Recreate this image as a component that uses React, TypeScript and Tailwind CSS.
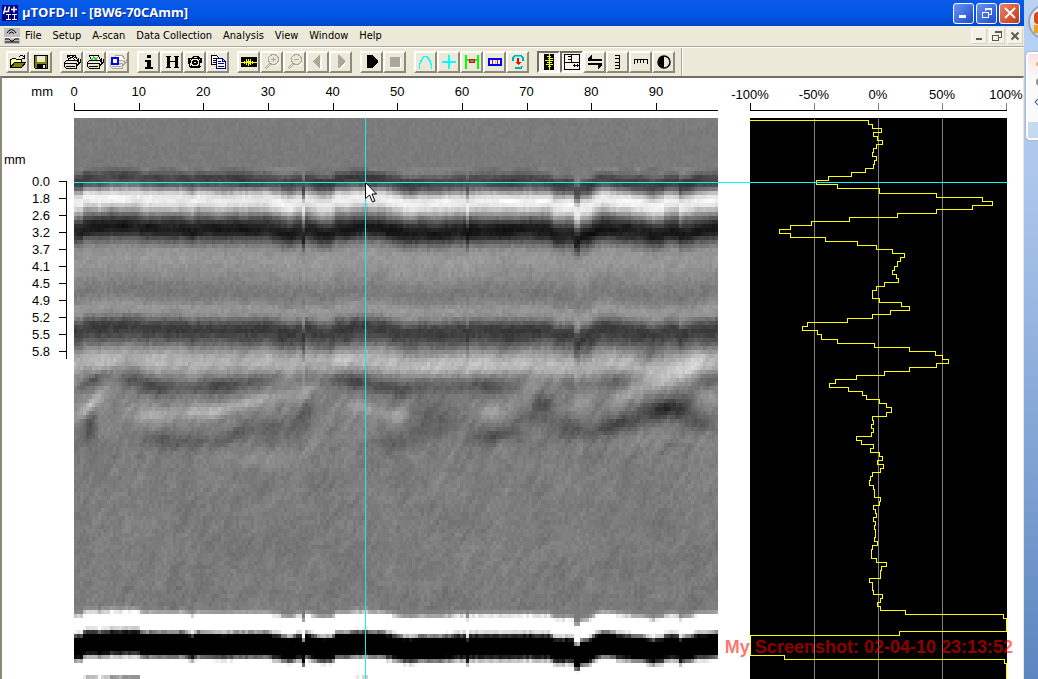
// frontend/src/App.tsx
import React, { useEffect, useRef } from 'react';

const MENU_ITEMS = ['File', 'Setup', 'A-scan', 'Data Collection', 'Analysis', 'View', 'Window', 'Help'];

const X_TICKS = [0, 10, 20, 30, 40, 50, 60, 70, 80, 90];
const DEPTHS = ['0.0', '1.8', '2.6', '3.2', '3.7', '4.1', '4.5', '4.9', '5.2', '5.5', '5.8'];
const PERCENTS = [-100, -50, 0, 50, 100];

// --- B-scan data ---
const COLS = 215;
const ROWS = 138;
const SCAN_H = 561;

// [depth in px, grey level] of a typical column
const PROFILE: [number, number][] = [
  [0, 124], [50, 122], [54, 100], [58, 68], [63, 66], [67, 88], [71, 140], [76, 215],
  [81, 244], [86, 232], [90, 190], [95, 130], [100, 76], [105, 38], [111, 24], [116, 40],
  [120, 78], [125, 118], [131, 146], [141, 152], [153, 144], [165, 128], [174, 120],
  [182, 132], [189, 152], [196, 142], [202, 100], [207, 64], [213, 58], [219, 78],
  [225, 105], [230, 138], [238, 170], [246, 176], [252, 155], [258, 135], [266, 126],
  [485, 122], [490, 124], [494, 165], [497, 280], [509, 300], [513, 190], [516, 40],
  [519, -60], [532, -60], [536, 20], [539, 140], [543, 300], [559, 290], [561, 150], [566, 110],
];

// [x, vertical shift] of the echoes along the scan
const SHIFTS: [number, number][] = [
  [0, 3], [8, 3], [10, -1], [34, -1], [37, -2], [64, -2], [67, 0], [110, 0], [117, 3], [122, 0],
  [150, 1], [190, 0], [206, 3], [216, 6], [222, 2], [227, 2], [228, 8], [231, 8], [232, 1],
  [246, 5], [257, 5], [262, 1], [291, -1], [308, 0], [320, 3], [336, 6], [345, 4], [370, 4],
  [392, 2], [393, 6], [396, 6], [397, 2], [440, 2], [477, 2], [479, 6], [500, 6], [502, 13],
  [505, 13], [507, 8], [515, 7], [522, 2], [530, -1], [545, 2], [568, 4], [579, 7], [590, 5],
  [593, 2], [604, 3], [606, 7], [612, 5], [622, 2], [644, 0],
];

// [x, y, radius x, radius y, slope, strength]
const BLOBS: [number, number, number, number, number, number][] = [
  [18, 262, 16, 6, -0.5, -48],
  [16, 286, 14, 8, -0.8, 60],
  [16, 308, 7, 12, -0.8, -46],
  [60, 262, 22, 8, 0.1, -30],
  [82, 270, 15, 8, 0, -50],
  [115, 271, 20, 7, 0, -28],
  [145, 268, 20, 8, -0.05, -56],
  [185, 262, 32, 7, -0.2, -34],
  [82, 297, 22, 9, 0, 46],
  [125, 294, 24, 7, 0, 44],
  [155, 289, 22, 7, -0.2, 38],
  [192, 280, 28, 6, -0.2, 30],
  [230, 275, 16, 8, -0.7, 38],
  [84, 322, 20, 8, 0, -28],
  [120, 325, 22, 8, 0, -26],
  [160, 316, 22, 8, -0.3, -32],
  [200, 308, 22, 10, 0, -18],
  [225, 301, 14, 12, -0.9, -38],
  [190, 342, 34, 8, 0, 14],
  [250, 262, 20, 8, 0, -22],
  [280, 263, 22, 8, 0.1, -48],
  [318, 271, 22, 8, 0.1, -48],
  [352, 268, 20, 8, 0, -30],
  [385, 268, 18, 8, 0, -28],
  [420, 268, 22, 9, 0.1, -50],
  [292, 290, 14, 7, 0.2, 30],
  [322, 297, 18, 8, 0.1, 38],
  [355, 300, 22, 12, 0, -24],
  [318, 325, 26, 8, 0, -26],
  [355, 315, 18, 8, 0, -22],
  [418, 294, 16, 9, 0, 38],
  [420, 318, 24, 8, -0.2, -36],
  [455, 272, 14, 12, -0.9, 28],
  [468, 286, 12, 9, 0, -56],
  [463, 300, 20, 8, 0, -30],
  [505, 265, 18, 8, 0, -26],
  [508, 282, 16, 9, -0.4, 24],
  [540, 284, 14, 9, -0.4, 14],
  [505, 312, 28, 11, 0, -30],
  [540, 262, 20, 8, -0.3, -22],
  [560, 274, 18, 7, -0.3, 24],
  [596, 260, 22, 12, -0.3, 48],
  [624, 250, 18, 8, -0.2, 16],
  [548, 305, 22, 9, -0.2, -46],
  [590, 290, 28, 11, -0.15, -72],
  [622, 302, 22, 10, 0.3, -34],
  [634, 278, 14, 8, 0, 28],
  [595, 320, 38, 8, 0, 14],
  [638, 262, 10, 8, 0, -30],
  [345, 248, 24, 8, 0, 24],
  [420, 248, 24, 7, 0, 20],
  [260, 240, 26, 7, 0, 24],
  [620, 238, 14, 8, 0, 22],
  [572, 238, 14, 7, 0, -28],
  [450, 248, 18, 8, 0, 12],
];

const interpolate = (points: [number, number][], at: number) => {
  if (at <= points[0][0]) return points[0][1];
  for (let i = 1; i < points.length; i++) {
    if (at <= points[i][0]) {
      const [x0, y0] = points[i - 1];
      const [x1, y1] = points[i];
      return y0 + ((y1 - y0) * (at - x0)) / (x1 - x0);
    }
  }
  return points[points.length - 1][1];
};

const hash = (a: number, b: number) => {
  const s = Math.sin(a * 127.1 + b * 311.7) * 43758.5453;
  return s - Math.floor(s) - 0.5;
};

const smoothNoise = (x: number, y: number) => {
  const xi = Math.floor(x);
  const yi = Math.floor(y);
  const fx = x - xi;
  const fy = y - yi;
  const top = hash(xi, yi) * (1 - fx) + hash(xi + 1, yi) * fx;
  const bottom = hash(xi, yi + 1) * (1 - fx) + hash(xi + 1, yi + 1) * fx;
  return top * (1 - fy) + bottom * fy;
};

const greyAt = (col: number, row: number) => {
  const x = col * 3 + 1;
  const y = row * (SCAN_H / ROWS) + 2;
  const shift = interpolate(SHIFTS, x) + hash(col, 5) * 1.2;
  let value = interpolate(PROFILE, y - shift);

  if (y > 225 && y < 485) {
    for (const [bx, by, rx, ry, slope, strength] of BLOBS) {
      const dx = x - bx;
      const dy = y - by - dx * slope;
      value += strength * Math.exp(-(dx * dx) / (rx * rx) - (dy * dy) / (ry * ry));
    }
  }
  // echoes lower down are streaked along the diagonal
  if (y > 120 && y < 490) {
    const fade = y < 220 ? 0.5 : y < 340 ? 1.3 : 0.8;
    value += smoothNoise((col + row * 0.9) / 2, (row - col * 0.6) / 5) * 20 * fade;
    value += smoothNoise(col / 9 + 40, row / 5) * 14 * fade;
  }
  // the echoes are not perfectly even along the scan
  if (y > 50 && y < 120) value += smoothNoise(col / 4, row / 2 + 90) * 26;
  if (y < 490) value += hash(col, row) * (y < 120 ? 9 : 14);
  return Math.max(0, Math.min(255, Math.round(value)));
};

function BScan() {
  const canvasRef = useRef<HTMLCanvasElement>(null);

  useEffect(() => {
    const ctx = canvasRef.current?.getContext('2d');
    if (!ctx) return;
    const image = ctx.createImageData(COLS, ROWS);
    for (let row = 0; row < ROWS; row++) {
      for (let col = 0; col < COLS; col++) {
        const grey = greyAt(col, row);
        const i = (row * COLS + col) * 4;
        image.data[i] = grey;
        image.data[i + 1] = grey;
        image.data[i + 2] = grey;
        image.data[i + 3] = 255;
      }
    }
    ctx.putImageData(image, 0, 0);
  }, []);

  return (
    <canvas
      ref={canvasRef}
      width={COLS}
      height={ROWS}
      className="block h-[561px] w-full [image-rendering:pixelated]"
    />
  );
}

// --- A-scan data: [x] or [x, height] per sample, height is 4 when left out ---
const SAMPLES: number[][] = [
  [118], [122], [131], [123], [127], [132], [126], [123], [122], [126], [124], [123], [115],
  [101], [78], [66], [87], [129, 5], [186], [232], [242], [222], [186], [147], [99], [61],
  [40], [29], [40], [75], [107], [126], [142], [154], [150], [147, 5], [144], [142], [146],
  [148], [134], [126], [122, 8], [129], [151], [159], [140], [122], [97], [57], [52], [67],
  [71, 5], [87], [124], [159], [185], [192], [198], [186], [159], [134], [106], [85], [79],
  [98], [112], [116], [129], [136], [141, 5], [136], [122], [123], [121], [123], [121],
  [106], [111], [123], [120], [129], [132], [127], [133], [130], [122], [120], [119, 5],
  [123], [124, 8], [130], [129], [123], [125], [126], [123], [125], [124], [125, 8], [124],
  [127], [122], [121, 9], [126], [136], [131], [130, 8], [119], [122, 8], [123], [132],
  [130], [127], [130], [155], [253], [256, 13], [149], [0, 20], [34], [254], [256, 16],
];

const buildTrace = () => {
  let y = 2;
  let d = 'M0 1V2';
  for (const [x, h = 4] of SAMPLES) {
    y += h;
    d += `H${x}V${y}`;
  }
  return d;
};

function AScan() {
  return (
    <svg className="block h-[561px] w-[257px] bg-black" viewBox="0 0 257 561" shapeRendering="crispEdges">
      <g transform="translate(0.5 0.5)" fill="none">
        <path d="M64 0V561M128 0V561M192 0V561" stroke="#808080" />
        <path d={buildTrace()} stroke="#ffff00" />
      </g>
    </svg>
  );
}

// --- Toolbar icons ---
const Icon = ({ children }: { children: React.ReactNode }) => (
  <svg className="h-4 w-4 overflow-visible" viewBox="0 0 16 16" fill="none" stroke="#000" shapeRendering="crispEdges" aria-hidden="true">
    {children}
  </svg>
);

const PrinterBody = ({ color = '#000', fill = '#ece9d8' }) => (
  <>
    <path d="M2.5 6.5H12L14.5 4.5V9L12.5 12.5V14.5H2.5L0.5 12.5V8.5Z" fill={fill} stroke={color} />
    <path d="M1 9.5H12.5V12M2 12.5H11M13 7.5H15M14 10.5L16 8.5V5" stroke={color} />
  </>
);

const icons: Record<string, React.ReactNode> = {
  open: (
    <>
      <path d="M1 13V5H2L3 4H6L7 5H11V8H5L1 13Z" fill="#ffff99" stroke="none" />
      <path d="M0.5 13.5V5.5H1.5L2.5 4.5H5.5L6.5 5.5H11.5V7.5" />
      <path d="M0.5 13.5L4.5 8.5H15.5L11.5 13.5Z" fill="#808000" />
      <path d="M9 2.5H10M10 1.5H13M13 2.5H14M14.5 1V5M12 4.5H15" />
    </>
  ),
  save: (
    <>
      <path d="M1.5 1.5H14.5V14.5H2.5L1.5 13.5Z" fill="#808000" />
      <path d="M4 2H12V8H4Z" fill="#ece9d8" stroke="none" />
      <path d="M4 10H13V15H4Z" fill="#000" stroke="none" />
      <path d="M10 11H12V14H10Z" fill="#ece9d8" stroke="none" />
    </>
  ),
  printB: (
    <>
      <PrinterBody />
      <path d="M4.5 6.5L3.5 1.5H11.5L13.5 6.5Z" fill="#fff" />
      <path d="M4 3L7 1L10 3L12 4M5 5L8 3L11 6" />
    </>
  ),
  printA: (
    <>
      <PrinterBody />
      <path d="M4.5 6.5L2.5 1.5H11.5L13.5 6.5Z" fill="#fff" />
      <path d="M4 5.5H5L6.5 3L9 5.5L10.5 3" stroke="#00e000" />
      <path d="M8 11.5H11" stroke="#ffff00" />
    </>
  ),
  printSetup: (
    <>
      <PrinterBody color="#aca899" />
      <path d="M5.5 5.5V1.5H12.5L14.5 5.5" fill="#fff" stroke="#aca899" />
      <path d="M2 4H8V10H2Z" fill="#fff" stroke="#0000ff" strokeWidth="2" />
    </>
  ),
  info: <path d="M6 1H10V4H6ZM4 6H10V13H12V15H4V13H6V8H4Z" fill="#000" stroke="none" />,
  header: <path d="M2 2H7V3H6V7H11V3H10V2H15V3H14V13H15V14H10V13H11V8H6V13H7V14H2V13H3V3H2Z" fill="#000" stroke="none" />,
  camera: (
    <>
      <path d="M1 4H4L6 2H11L13 4H15V6L14 13L12 14H4L2 13L1 7Z" fill="#000" stroke="none" />
      <circle cx="8" cy="8.5" r="3.5" stroke="#ece9d8" />
      <circle cx="8" cy="8.5" r="1" fill="#ece9d8" stroke="none" />
      <path d="M3 5.5H4M12 5.5H13M7 3.5H10M3 9V12M13 9V12" stroke="#ece9d8" />
    </>
  ),
  copy: (
    <>
      <path d="M1.5 1.5H6.5L9.5 4.5V10.5H1.5Z" fill="#fff" />
      <path d="M3 4.5H6M3 6.5H8M3 8.5H8" />
      <path d="M6.5 4.5H12.5L15.5 7.5V14.5H6.5Z" fill="#fff" stroke="#000080" />
      <path d="M12.5 5V7.5H15M8 7.5H11M8 9.5H14M8 12.5H14" stroke="#000080" />
    </>
  ),
  wave: (
    <>
      <path d="M0 3H16V13H0Z" fill="#000" stroke="none" />
      <path d="M0 8.5H3M3.5 7V10M4.5 8V9M5.5 5V11M6.5 7V9M7.5 5V12M8.5 7V10M9.5 5V11M10.5 8V9M11.5 7V10M12 8.5H16" stroke="#ffff00" />
    </>
  ),
  zoomIn: (
    <>
      <path d="M1 14L6 9M2 15L7 10" stroke="#aca899" />
      <circle cx="9.5" cy="5.5" r="5" stroke="#aca899" />
      <path d="M7 5.5H12M9.5 3V8" stroke="#aca899" />
      <path d="M11 11.5H13L15.5 8" stroke="#fff" />
    </>
  ),
  zoomOut: (
    <>
      <path d="M1 14L6 9M2 15L7 10" stroke="#aca899" />
      <circle cx="9.5" cy="5.5" r="5" stroke="#aca899" />
      <path d="M7 5.5H12" stroke="#aca899" />
      <path d="M11 11.5H13L15.5 8" stroke="#fff" />
    </>
  ),
  previous: (
    <>
      <path d="M10 15V14L11 2H12V15Z" fill="#fff" stroke="none" />
      <path d="M10 1V14H9L3 8V7L9 1Z" fill="#aca899" stroke="none" />
    </>
  ),
  next: (
    <>
      <path d="M6 15H7L13 9V8L12 8L6 14Z" fill="#fff" stroke="none" />
      <path d="M5 1V14H6L12 8V7L6 1Z" fill="#aca899" stroke="none" />
    </>
  ),
  play: <path d="M3 1H8L14 7V8L8 14H3Z" fill="#000" stroke="none" />,
  stop: (
    <>
      <path d="M4 4H14V14H4Z" fill="#fff" stroke="none" />
      <path d="M3 3H13V13H3Z" fill="#aca899" stroke="none" />
    </>
  ),
  arc: <path d="M1.5 15V11L3.5 6L6 2.5H9L11.5 6L13.5 11V15" stroke="#00ffff" strokeWidth="1.5" />,
  cross: <path d="M8 1V15M1 8H15" stroke="#00ffff" strokeWidth="2" />,
  gate: (
    <>
      <path d="M2 1V15M14 1V15M3 6H13" stroke="#00ff00" strokeWidth="2" />
      <path d="M5.5 5.5H10.5V8.5H5.5Z" fill="#808080" stroke="#ff0000" />
    </>
  ),
  region: (
    <>
      <path d="M2 5H14V11H2Z" fill="#fff" stroke="#0000ff" strokeWidth="2" />
      <path d="M5.5 6V10M10.5 6V10" stroke="#ff0000" />
      <path d="M8 6V10" stroke="#c0c0c0" />
    </>
  ),
  probe: (
    <>
      <path d="M3 7V4L5 2H11L13 4V7M5 14H11L12 12" stroke="#00b0b0" strokeWidth="2" />
      <path d="M4 4L6 2H10L12 4" stroke="#00ffff" />
      <path d="M8 4V10" stroke="#ff0000" strokeWidth="2" />
      <path d="M5 8H11L8 11Z" fill="#ff0000" stroke="none" />
    </>
  ),
  aScanView: (
    <>
      <path d="M3 0H13V16H3Z" fill="#000" stroke="none" />
      <path d="M8.5 0V16M6 2.5H10M7 4.5H12M4 6.5H12M6 8.5H11M5 10.5H12M7 12.5H10" stroke="#ffff00" />
    </>
  ),
  axes: (
    <>
      <path d="M0.5 0.5H15.5V15.5H0.5ZM0 8.5H15M7.5 0V8" />
      <path d="M4 2.5H8M4 5.5H8M9 11.5H15M10.5 10V13M13.5 10V13" />
    </>
  ),
  swap: (
    <>
      <path d="M1 6H15M1 10H15" strokeWidth="2" />
      <path d="M1 6V4L5 1V6ZM15 10V12L11 15V10Z" fill="#000" stroke="none" />
    </>
  ),
  rulerY: <path d="M9.5 1V15M5 1.5H10M5 4.5H10M5 8.5H10M5 11.5H10M5 14.5H10" />,
  rulerX: <path d="M1 5.5H15M1.5 5V10M4.5 5V9M7.5 5V9M10.5 5V9M14.5 5V10" />,
  contrast: (
    <>
      <circle cx="8" cy="8" r="6" strokeWidth="1.5" shapeRendering="auto" />
      <path d="M8 2A6 6 0 0 0 8 14Z" fill="#000" stroke="none" />
    </>
  ),
};

const TOOL_GROUPS: [string, string][][] = [
  [['open', 'Open'], ['save', 'Save']],
  [['printB', 'Print B-scan'], ['printA', 'Print A-scan'], ['printSetup', 'Print setup']],
  [['info', 'Information'], ['header', 'Header'], ['camera', 'Snapshot'], ['copy', 'Copy']],
  [['wave', 'Waveform'], ['zoomIn', 'Zoom in'], ['zoomOut', 'Zoom out'], ['previous', 'Previous'], ['next', 'Next']],
  [['play', 'Start'], ['stop', 'Stop']],
  [['arc', 'Arc'], ['cross', 'Cross cursor'], ['gate', 'Gate'], ['region', 'Region'], ['probe', 'Probe']],
  [['aScanView', 'Show A-scan'], ['axes', 'Show axes'], ['swap', 'Swap'], ['rulerY', 'Depth ruler'], ['rulerX', 'Scan ruler'], ['contrast', 'Contrast']],
];

const PRESSED = ['aScanView', 'axes'];

function ToolButton({ name, label }: { name: string; label: string }) {
  const pressed = PRESSED.includes(name);
  return (
    <button
      type="button"
      aria-label={label}
      aria-pressed={pressed}
      className={`flex h-[22px] w-[23px] items-center justify-center border-2 ${
        pressed
          ? 'border-t-[#716f64] border-l-[#716f64] border-r-white border-b-white bg-[#f6f4ec]'
          : 'border-t-white border-l-white border-r-[#8d8a7c] border-b-[#8d8a7c] bg-[#ece9d8]'
      }`}
    >
      <Icon>{icons[name]}</Icon>
    </button>
  );
}

function TitleBar() {
  const button = 'flex h-[21px] w-[21px] items-center justify-center rounded-[3px] border border-white';
  return (
    <header className="flex h-[26px] items-center bg-linear-to-b from-[#0a5be8] via-[#0055e5] via-60% to-[#0046c8] pr-1 pl-0.5">
      <svg className="h-4 w-4 shrink-0 bg-[#000080]" viewBox="0 0 16 16" stroke="#fff" fill="none" aria-hidden="true">
        <path d="M3.5 1.5L1.5 9M2.5 6.5H6L7.5 1.5M6.5 5V7M9 4.5H15M12 1.5V7.5" strokeWidth="1.5" />
        <path d="M4 9.5H9M4 14.5H9M6.5 9.5V14.5M10 9.5H15M10 14.5H15M12.5 9.5V14.5" shapeRendering="crispEdges" />
      </svg>
      <h1 className="grow pl-1 font-['Open_Sans','Noto_Sans',sans-serif] text-[13px] font-bold text-white [text-shadow:1px_1px_#0a2a8a]">
        µTOFD-II - [BW6-70CAmm]
      </h1>
      <div className="flex gap-0.5">
        <button type="button" aria-label="Minimize" className={`${button} bg-linear-to-br from-[#6b93f5] to-[#1c49c9]`}>
          <svg className="h-3 w-3" viewBox="0 0 12 12" aria-hidden="true">
            <path d="M1 8H8V11H1Z" fill="#fff" />
          </svg>
        </button>
        <button type="button" aria-label="Restore" className={`${button} bg-linear-to-br from-[#6b93f5] to-[#1c49c9]`}>
          <svg className="h-3 w-3" viewBox="0 0 12 12" fill="none" stroke="#fff" shapeRendering="crispEdges" aria-hidden="true">
            <path d="M4 1.5H11M4 2.5H11M10.5 2V7.5H8M4.5 2V4M1 5H8M1.5 5V10.5H7.5V5" />
          </svg>
        </button>
        <button type="button" aria-label="Close" className={`${button} bg-linear-to-br from-[#ee8060] to-[#c33414]`}>
          <svg className="h-3 w-3" viewBox="0 0 12 12" stroke="#fff" strokeWidth="2" aria-hidden="true">
            <path d="M1 1L11 11M11 1L1 11" />
          </svg>
        </button>
      </div>
    </header>
  );
}

function MenuBar() {
  const button = 'flex h-4 w-4 items-center justify-center border border-t-white border-l-white border-r-[#d5d2c2] border-b-[#d5d2c2] bg-[#f4f2e8]';
  return (
    <nav className="flex h-5 items-center pr-px pl-1">
      <svg className="h-4 w-4 shrink-0 bg-[#c0c0c0]" viewBox="0 0 16 16" fill="none" stroke="#000" aria-hidden="true">
        <path d="M3 5L5 2.5L7.5 1.5L10 2.5L12 5M5 5.5L7.5 4L10 5.5M1 11H5L7 13H9L11 11H15M1 14H15" />
        <path d="M0 9.5H16" stroke="#fff" />
      </svg>
      <ul className="flex grow gap-[11px] pl-[5px] font-['DejaVu_Sans_Condensed','DejaVu_Sans',sans-serif]">
        {MENU_ITEMS.map((item) => (
          <li key={item}>
            <button type="button" className="block text-[11px] leading-4">
              {item}
            </button>
          </li>
        ))}
      </ul>
      <div className="flex gap-0.5">
        <button type="button" aria-label="Minimize document" className={button}>
          <svg className="h-2.5 w-2.5" viewBox="0 0 10 10" aria-hidden="true">
            <path d="M2 7H8V9H2Z" fill="#5c5a50" />
          </svg>
        </button>
        <button type="button" aria-label="Restore document" className={button}>
          <svg className="h-2.5 w-2.5" viewBox="0 0 10 10" fill="none" stroke="#5c5a50" shapeRendering="crispEdges" aria-hidden="true">
            <path d="M3 0.5H10M3 1.5H10M9.5 1V6.5H7M0 4.5H7M0.5 4V9.5H6.5V4" />
          </svg>
        </button>
        <button type="button" aria-label="Close document" className={button}>
          <svg className="h-2.5 w-2.5" viewBox="0 0 10 10" stroke="#5c5a50" strokeWidth="2" aria-hidden="true">
            <path d="M1.5 1.5L8.5 8.5M8.5 1.5L1.5 8.5" />
          </svg>
        </button>
      </div>
    </nav>
  );
}

function Toolbar() {
  return (
    <div className="flex h-[30px] items-center border-t border-[#aca899] bg-[#ece9d8] shadow-[inset_0_1px_#fff]">
      <div className="flex gap-2 pl-1.5">
        {TOOL_GROUPS.map((group) => (
          <div key={group[0][0]} className="flex">
            {group.map(([name, label]) => (
              <ToolButton key={name} name={name} label={label} />
            ))}
          </div>
        ))}
      </div>
      <div className="ml-1.5 h-7 w-0.5 border-l border-[#aca899] bg-white" />
    </div>
  );
}

// Horizontal distance scale above the B-scan
function DistanceAxis() {
  return (
    <svg className="block h-10 w-full overflow-visible text-[13px]" shapeRendering="crispEdges">
      {X_TICKS.map((tick) => (
        <React.Fragment key={tick}>
          <text x={`${tick * 1.004}%`} y="18" textAnchor="middle">
            {tick}
          </text>
          <rect x={`${tick * 1.004}%`} y="25" width="1" height="7" />
        </React.Fragment>
      ))}
      <rect x="0" y="32" width="100%" height="1" />
    </svg>
  );
}

function AmplitudeAxis() {
  return (
    <svg className="block h-10 w-[257px] overflow-visible text-[13px]" shapeRendering="crispEdges">
      {PERCENTS.map((value, i) => (
        <React.Fragment key={value}>
          <text x={i * 64} y="21" textAnchor="middle">
            {value}%
          </text>
          <rect x={i * 64} y="25" width="1" height="7" fill={i === 0 ? '#000' : '#808080'} />
        </React.Fragment>
      ))}
      <rect x="0" y="32" width="257" height="1" />
    </svg>
  );
}

function DepthAxis() {
  return (
    <svg className="block h-[561px] w-full text-[13px]" shapeRendering="crispEdges">
      <text x="2" y="46">
        mm
      </text>
      {DEPTHS.map((depth, i) => (
        <React.Fragment key={depth}>
          <text x="48" y={68 + i * 17} textAnchor="end">
            {depth}
          </text>
          <rect x="57" y={63 + i * 17} width="8" height="1" />
        </React.Fragment>
      ))}
      <rect x="64" y="63" width="1" height="178" />
    </svg>
  );
}

function ScanView() {
  return (
    <main className="relative flex grow overflow-hidden border-t-2 border-r border-l-2 border-t-[#716f64] border-r-[#ece9d8] border-l-[#8d8a7c] bg-white">
      <div className="w-[72px] shrink-0">
        <div className="h-10 pt-1 pr-[21px] text-right text-[13px] leading-5">mm</div>
        <DepthAxis />
      </div>
      <div className="min-w-0 grow">
        <DistanceAxis />
        <div className="relative">
          <BScan />
          {/* scan position cursor */}
          <div className="absolute inset-y-0 left-[45.2%] w-px bg-[#20e8e8]" />
          <svg className="absolute top-16 left-[45.2%] h-[21px] w-3" viewBox="0 0 12 21" fill="#fff" stroke="#000" aria-hidden="true">
            <path d="M0.5 0.5V16.5L4.5 13L7.5 20L10 19L7 12H11.5Z" />
          </svg>
        </div>
      </div>
      <div className="ml-8 w-[273px] shrink-0">
        <AmplitudeAxis />
        <AScan />
      </div>
      {/* depth cursor, runs over both views */}
      <div className="absolute top-[104px] right-4 left-[72px] h-px bg-[#00ffff]" />
      <p className="absolute right-2.5 bottom-5 font-bold text-[18px] leading-6 whitespace-nowrap text-[#ff0000]/55">
        My Screenshot: 02-04-10 23:13:52
      </p>
    </main>
  );
}

// Strip of the desktop that shows beside the window
function DesktopStrip() {
  return (
    <aside className="flex w-3.5 shrink-0 flex-col overflow-hidden bg-linear-to-b from-[#b9d3f3] via-[#a9c4ea] via-30% to-[#5c86c0]">
      <div className="mt-1 ml-1 h-9 w-9 shrink-0 rounded-full border-2 border-[#9aa5b8] bg-linear-to-b from-[#f4f4f8] to-[#c9d4e6] pt-1.5 pl-1">
        <div className="h-3 w-3 rounded-sm bg-[#d9481c]" />
        <div className="mt-px h-2 w-3 bg-[#f0a020]" />
      </div>
      <div className="mt-3 ml-0.5 flex h-[88px] w-9 shrink-0 flex-col rounded-sm border-2 border-white bg-linear-to-b from-[#f8e4e6] to-[#fafafa] to-30% outline outline-[#b0b8c8]">
        <div className="flex grow flex-col justify-end gap-3 pb-4 pl-2">
          <div className="h-1 w-2 rounded-full bg-[#f0a860]" />
          <div className="h-2 w-2 rounded-full bg-[#8a8a8a]" />
          <div className="h-2 w-2 rotate-45 border border-[#3a5a9a]" />
        </div>
        <div className="h-4 shrink-0 bg-[#c5d9f1]" />
      </div>
    </aside>
  );
}

export default function App() {
  return (
    <div className="flex h-screen overflow-hidden font-['Liberation_Sans',Arial,sans-serif] text-black">
      <div className="flex min-w-0 grow flex-col bg-[#ece9d8]">
        <TitleBar />
        <MenuBar />
        <Toolbar />
        <ScanView />
      </div>
      <DesktopStrip />
    </div>
  );
}
